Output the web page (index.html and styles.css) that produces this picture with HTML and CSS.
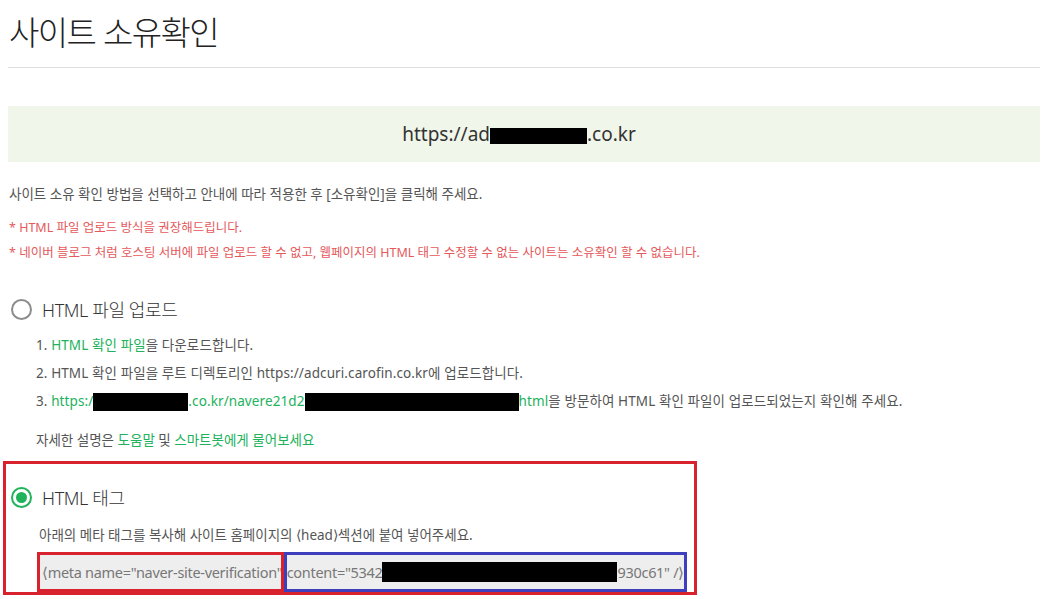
FILE: index.html
```html
<!DOCTYPE html>
<html lang="ko">
<head>
    <meta charset="UTF-8">
    <title>사이트 소유확인</title>
    <link rel="stylesheet" href="styles.css">
</head>
<body>
    <div class="container">
        <h1 class="title">사이트 소유확인</h1>

        <div class="site-box">
            <span>https://ad<span class="mask mask-site"></span>.co.kr</span>
        </div>

        <p class="desc">사이트 소유 확인 방법을 선택하고 안내에 따라 적용한 후 [소유확인]을 클릭해 주세요.</p>
        <p class="notice">* HTML 파일 업로드 방식을 권장해드립니다.</p>
        <p class="notice">* 네이버 블로그 처럼 호스팅 서버에 파일 업로드 할 수 없고, 웹페이지의 HTML 태그 수정할 수 없는 사이트는 소유확인 할 수 없습니다.</p>

        <div class="method">
            <label class="radio-row">
                <span class="radio"></span>
                <span class="radio-label">HTML 파일 업로드</span>
            </label>
            <ol class="steps">
                <li>1. <a href="#" class="green">HTML 확인 파일</a>을 다운로드합니다.</li>
                <li>2. HTML 확인 파일을 루트 디렉토리인 https://adcuri.carofin.co.kr에 업로드합니다.</li>
                <li>3. <span class="green">https:/<span class="mask mask-a"></span>.co.kr/navere21d2<span class="mask mask-b"></span>html</span>을 방문하여 HTML 확인 파일이 업로드되었는지 확인해 주세요.</li>
            </ol>
            <p class="help">자세한 설명은 <a href="#" class="green">도움말</a> 및 <a href="#" class="green">스마트봇에게 물어보세요</a></p>
        </div>

        <div class="method-tag">
            <label class="radio-row">
                <span class="radio checked"></span>
                <span class="radio-label">HTML 태그</span>
            </label>
            <p class="tag-desc">아래의 메타 태그를 복사해 사이트 홈페이지의 ⟨head⟩섹션에 붙여 넣어주세요.</p>
            <div class="code-box"><span class="mark-red">⟨meta name="naver-site-verification"</span><span class="mark-blue">content="5342<span class="mask mask-c"></span>930c61" /⟩</span></div>
        </div>
    </div>
</body>
</html>
```

FILE: styles.css
```css
body {
    margin: 0;
    padding: 0;
    background-color: #fff;
    font-family: "Noto Sans", "Noto Sans CJK KR", sans-serif;
    color: #555;
}

.container {
    margin: 0 4px 0 8px;
}

.title {
    margin: 0;
    padding: 10px 0 0 1px;
    height: 57px;
    font-family: "Noto Sans CJK KR", sans-serif;
    font-size: 33px;
    font-weight: 300;
    line-height: 42px;
    letter-spacing: -1.6px;
    color: #222;
    border-bottom: 1px solid #dedede;
}

.site-box {
    margin-top: 38px;
    height: 56px;
    background-color: #f0f6e9;
    display: flex;
    align-items: center;
    justify-content: center;
    font-size: 19px;
    color: #333;
    padding-right: 10px;
}

.mask {
    display: inline-block;
    background-color: #000;
    vertical-align: middle;
}

.mask-site {
    width: 97px;
    height: 16px;
}

.desc {
    margin: 22px 0 0 1px;
    font-size: 13.5px;
    line-height: 20px;
    color: #555;
}

.notice {
    margin: 14px 0 0 1px;
    font-size: 12.5px;
    line-height: 20px;
    color: #e5585c;
}

.notice + .notice {
    margin-top: 5px;
}

.method {
    margin-top: 33px;
}

.radio-row {
    display: flex;
    align-items: center;
    gap: 10px;
    height: 26px;
    padding-left: 3px;
}

.radio {
    width: 17px;
    height: 17px;
    border: 2px solid #8c8c8c;
    border-radius: 50%;
    position: relative;
}

.radio.checked {
    border-color: #21b25c;
}

.radio.checked::after {
    content: "";
    position: absolute;
    left: 3px;
    top: 3px;
    width: 11px;
    height: 11px;
    border-radius: 50%;
    background-color: #21b25c;
}

.radio-label {
    font-size: 18px;
    font-weight: 300;
    color: #333;
    letter-spacing: -0.4px;
}

.steps {
    list-style: none;
    margin: 9px 0 0 0;
    padding: 0 0 0 28px;
}

.steps li {
    font-size: 13.5px;
    line-height: 28px;
    letter-spacing: 0.1px;
    color: #555;
}

.green {
    color: #21b25c;
    text-decoration: none;
}

.mask-a {
    width: 95px;
    height: 18px;
}

.mask-b {
    width: 214px;
    height: 18px;
}

.help {
    margin: 15px 0 0 28px;
    font-size: 13.5px;
    line-height: 20px;
}

.method-tag {
    margin: 11px 0 0 -5px;
    width: 688px;
    height: 108px;
    border: 3px solid #d8222e;
    padding-top: 20px;
}

.method-tag .radio-row {
    padding-left: 5px;
}

.tag-desc {
    margin: 15px 0 0 33px;
    font-size: 13.5px;
    line-height: 20px;
}

.code-box {
    margin: 7px 0 0 31px;
    width: 650px;
    height: 40px;
    background-color: #eee;
    display: flex;
    font-size: 14.5px;
    color: #777;
    letter-spacing: -0.3px;
    white-space: nowrap;
}

.mark-red {
    display: flex;
    align-items: center;
    border: 3px solid #d8222e;
    padding-left: 2px;
    width: 247px;
    box-sizing: border-box;
    overflow: hidden;
}

.mark-blue {
    display: flex;
    align-items: center;
    border: 3px solid #3e3fbd;
    flex: 1;
}

.mask-c {
    width: 235px;
    height: 20px;
}
```
